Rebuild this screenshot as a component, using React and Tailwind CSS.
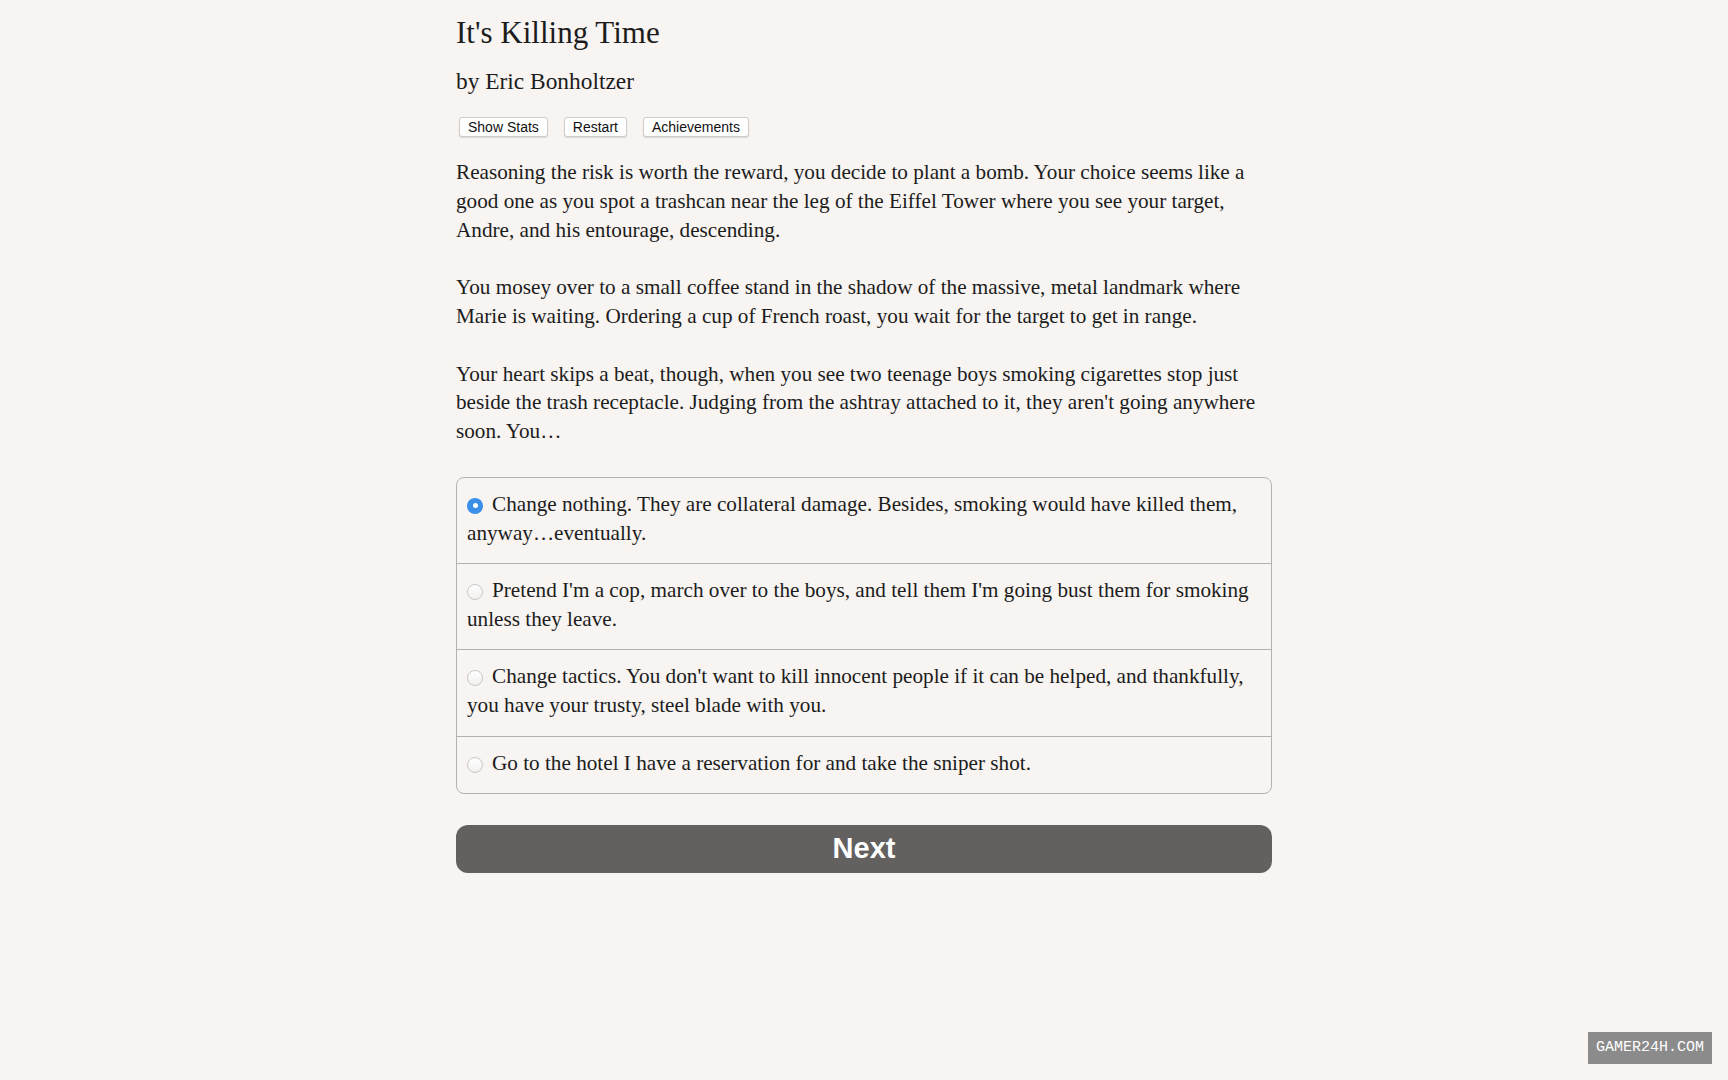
import React, { useState } from 'react';

// ── Story data ───────────────────────────────────────────────────────────────

const PARAGRAPHS = [
  'Reasoning the risk is worth the reward, you decide to plant a bomb. Your choice seems like a good one as you spot a trashcan near the leg of the Eiffel Tower where you see your target, Andre, and his entourage, descending.',
  'You mosey over to a small coffee stand in the shadow of the massive, metal landmark where Marie is waiting. Ordering a cup of French roast, you wait for the target to get in range.',
  "Your heart skips a beat, though, when you see two teenage boys smoking cigarettes stop just beside the trash receptacle. Judging from the ashtray attached to it, they aren't going anywhere soon. You…",
];

const CHOICES = [
  'Change nothing. They are collateral damage. Besides, smoking would have killed them, anyway…eventually.',
  "Pretend I'm a cop, march over to the boys, and tell them I'm going bust them for smoking unless they leave.",
  "Change tactics. You don't want to kill innocent people if it can be helped, and thankfully, you have your trusty, steel blade with you.",
  'Go to the hotel I have a reservation for and take the sniper shot.',
];

const SERIF = "font-['Liberation_Serif','Times_New_Roman',serif]";
const SANS = "font-['Liberation_Sans',Arial,sans-serif]";

// ── Small pieces ─────────────────────────────────────────────────────────────

const ToolButton = ({ children }) => (
  <button
    type="button"
    className={`
      h-5 px-[8px] rounded-[3px]
      border border-[#cfcccb] bg-white
      shadow-[0_1px_1px_rgba(0,0,0,0.12)]
      text-[14px] leading-[18px] text-[#111]
      ${SANS}
    `}
  >
    {children}
  </button>
);

// Both states are plain inline-blocks so they sit on the same baseline
const Radio = ({ checked }) =>
  checked ? (
    <span className="inline-block w-4 h-4 mr-[9px] rounded-full bg-[#3b8fe8] align-[-3px]">
      <span className="block w-[5px] h-[5px] mx-auto mt-[5.5px] rounded-full bg-white" />
    </span>
  ) : (
    <span className="inline-block w-4 h-4 mr-[9px] rounded-full border border-[#c9c6c4] bg-gradient-to-b from-[#ffffff] to-[#f1f0ef] align-[-3px]" />
  );

// ─────────────────────────────────────────────────────────────────────────────

export default function App() {
  const [choice, setChoice] = useState(0);

  return (
    <div className={`relative min-h-screen w-full bg-[#f7f4f1] text-[#1c1c1c] ${SERIF}`}>
      <div className="w-[816px] mx-auto pt-[15px]">

        {/* Header */}
        <h1 className="text-[31px] leading-[36px] font-normal">It's Killing Time</h1>
        <h2 className="mt-[16px] text-[23.4px] leading-[28px] font-normal">by Eric Bonholtzer</h2>

        <div className="mt-[22px] ml-[3px] flex gap-4">
          <ToolButton>Show Stats</ToolButton>
          <ToolButton>Restart</ToolButton>
          <ToolButton>Achievements</ToolButton>
        </div>

        {/* Passage */}
        <div className="mt-[21px] flex flex-col gap-[28.8px] text-[21.2px] leading-[28.8px]">
          {PARAGRAPHS.map((p, i) => (
            <p key={i}>{p}</p>
          ))}
        </div>

        {/* Choices */}
        <div className="mt-[31px] rounded-lg border border-[#b4b2b0] overflow-hidden">
          {CHOICES.map((c, i) => (
            <div
              key={i}
              onClick={() => setChoice(i)}
              className={`
                px-[10px] pt-[12px] pb-[16px] cursor-pointer
                text-[21.2px] leading-[28.6px]
                ${i > 0 ? 'border-t border-[#b4b2b0]' : ''}
              `}
            >
              <Radio checked={choice === i} />
              {c}
            </div>
          ))}
        </div>

        <button
          type="button"
          className={`
            mt-[31px] w-full h-12 rounded-[12px]
            bg-[#626160] text-white
            text-[29px] font-bold
            ${SANS}
          `}
        >
          Next
        </button>
      </div>

      {/* Corner watermark */}
      <div className="absolute right-[16px] bottom-[16px] h-8 px-[8px] flex items-center bg-[#8c8b8b] text-white text-[15px] font-['Liberation_Mono',monospace]">
        GAMER24H.COM
      </div>
    </div>
  );
}
